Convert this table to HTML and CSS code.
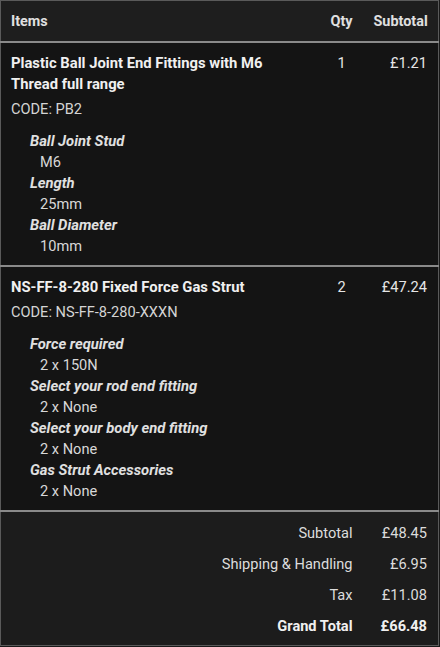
FILE: index.html
```html
<!DOCTYPE html>
<html lang="en">
<head>
    <meta charset="UTF-8">
    <meta name="viewport" content="width=device-width, initial-scale=1.0">
    <title>Order Items</title>
    <link rel="stylesheet" href="styles.css">
</head>
<body>
    <table class="order-items">
        <colgroup>
            <col>
            <col class="col-qty">
            <col class="col-subtotal">
        </colgroup>
        <thead>
            <tr>
                <th class="name">Items</th>
                <th class="qty">Qty</th>
                <th class="price">Subtotal</th>
            </tr>
        </thead>
        <tbody>
            <tr>
                <td class="name">
                    <strong class="product-name">Plastic Ball Joint End Fittings with M6 Thread full range</strong>
                    <div class="sku">CODE: PB2</div>
                    <dl class="item-options">
                        <dt>Ball Joint Stud</dt>
                        <dd>M6</dd>
                        <dt>Length</dt>
                        <dd>25mm</dd>
                        <dt>Ball Diameter</dt>
                        <dd>10mm</dd>
                    </dl>
                </td>
                <td class="qty">1</td>
                <td class="price">£1.21</td>
            </tr>
            <tr>
                <td class="name">
                    <strong class="product-name">NS-FF-8-280 Fixed Force Gas Strut</strong>
                    <div class="sku">CODE: NS-FF-8-280-XXXN</div>
                    <dl class="item-options">
                        <dt>Force required</dt>
                        <dd>2 x 150N</dd>
                        <dt>Select your rod end fitting</dt>
                        <dd>2 x None</dd>
                        <dt>Select your body end fitting</dt>
                        <dd>2 x None</dd>
                        <dt>Gas Strut Accessories</dt>
                        <dd>2 x None</dd>
                    </dl>
                </td>
                <td class="qty">2</td>
                <td class="price">£47.24</td>
            </tr>
        </tbody>
        <tfoot>
            <tr class="first">
                <th colspan="2">Subtotal</th>
                <td>£48.45</td>
            </tr>
            <tr>
                <th colspan="2">Shipping &amp; Handling</th>
                <td>£6.95</td>
            </tr>
            <tr>
                <th colspan="2">Tax</th>
                <td>£11.08</td>
            </tr>
            <tr class="grand-total">
                <th colspan="2"><strong>Grand Total</strong></th>
                <td><strong>£66.48</strong></td>
            </tr>
        </tfoot>
    </table>
</body>
</html>
```

FILE: styles.css
```css
body {
    margin: 0;
    background-color: #1a1a1a;
    font-family: Roboto, "Liberation Sans", Arial, sans-serif;
    font-size: 14.6px;
    color: #e6e6e6;
}

.order-items {
    width: 439px;
    margin: 0;
    border-collapse: collapse;
    border: 1px solid #5a5a5a;
    table-layout: fixed;
}

.col-qty {
    width: 44px;
}

.col-subtotal {
    width: 75px;
}

/* 헤더 */
thead {
    background-color: #1e1e1e;
}

thead th {
    height: 40px;
    padding: 0 11px 0 10px;
    font-size: 14.4px;
    font-weight: bold;
    color: #e0e0e0;
    border-bottom: 2px solid #8a8a8a;
}

thead th.name {
    text-align: left;
}

/* 상품 행 */
tbody {
    background-color: #141414;
}

tbody tr + tr td {
    border-top: 2px solid #8a8a8a;
}

tbody td {
    vertical-align: top;
    padding: 10px 11px 8px 10px;
    line-height: 21px;
}

td.qty,
th.qty {
    text-align: center;
    padding-left: 0;
    padding-right: 0;
}

td.price,
th.price {
    text-align: right;
}

.product-name {
    display: block;
    font-size: 14.8px;
    font-weight: bold;
    color: #f0f0f0;
}

.sku {
    margin-top: 4px;
    color: #d4d4d4;
}

.item-options {
    margin: 11px 0 0 19px;
}

.item-options dt {
    font-size: 14.8px;
    font-style: italic;
    font-weight: bold;
    color: #e0e0e0;
}

.item-options dd {
    margin: 0 0 0 10px;
    color: #d8d8d8;
}

/* 합계 */
tfoot {
    background-color: #1c1c1c;
}

tfoot tr.first th,
tfoot tr.first td {
    border-top: 2px solid #8a8a8a;
    padding-top: 11px;
}

tfoot th,
tfoot td {
    text-align: right;
    padding: 5px 11px;
    height: 21px;
    line-height: 21px;
    font-weight: normal;
    color: #dcdcdc;
}

tfoot tr.grand-total th,
tfoot tr.grand-total td {
    padding-bottom: 8px;
}

.grand-total strong {
    color: #f0f0f0;
}
```
